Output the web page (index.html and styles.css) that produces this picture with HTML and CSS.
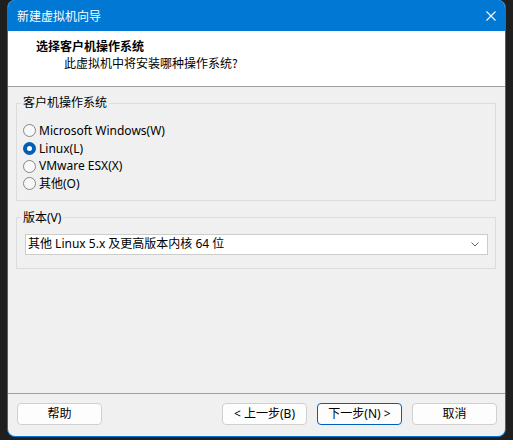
FILE: index.html
```html
<html>
    <head>
        <title>新建虚拟机向导</title>
        <link rel="stylesheet" href="styles.css">
    </head>
    <body>
        <div class="window">
            <div class="titlebar">
                <span class="title">新建虚拟机向导</span>
                <svg class="close" width="10" height="10" viewBox="0 0 10 10">
                    <path d="M0.5 0.5 L9.5 9.5 M9.5 0.5 L0.5 9.5" stroke="#fff" stroke-width="1.1" fill="none"/>
                </svg>
            </div>

            <div class="header">
                <div class="header-title">选择客户机操作系统</div>
                <div class="header-sub">此虚拟机中将安装哪种操作系统?</div>
            </div>

            <div class="main">
                <fieldset class="group">
                    <legend>客户机操作系统</legend>
                    <div class="radios">
                        <div class="radio"><span class="dot"></span>Microsoft Windows(W)</div>
                        <div class="radio checked"><span class="dot"></span>Linux(L)</div>
                        <div class="radio"><span class="dot"></span>VMware ESX(X)</div>
                        <div class="radio"><span class="dot"></span>其他(O)</div>
                    </div>
                </fieldset>

                <fieldset class="group version">
                    <legend>版本(V)</legend>
                    <div class="combo">
                        <span>其他 Linux 5.x 及更高版本内核 64 位</span>
                        <svg width="8" height="5" viewBox="0 0 8 5">
                            <path d="M0.5 0.5 L4 4 L7.5 0.5" stroke="#606060" stroke-width="1" fill="none"/>
                        </svg>
                    </div>
                </fieldset>
            </div>

            <div class="footer">
                <button class="btn">帮助</button>
                <div class="spacer"></div>
                <button class="btn">&lt; 上一步(B)</button>
                <button class="btn primary">下一步(N) &gt;</button>
                <button class="btn">取消</button>
            </div>
        </div>
    </body>
</html>
```

FILE: styles.css
```css
body {
    margin: 0;
    background-color: #1f1f1f;
    font-family: "Noto Sans", "Noto Sans CJK SC", sans-serif;
    font-size: 12px;
    color: #000;
}
.window {
    box-sizing: border-box;
    margin-left: 7px;
    width: 499px;
    height: 437px;
    border: 1px solid #0078d4;
    border-top: none;
    border-radius: 8px;
    overflow: hidden;
    background-color: #f0f0f0;
    display: flex;
    flex-direction: column;
}
.titlebar {
    height: 31px;
    background-color: #0078d4;
    color: white;
    display: flex;
    align-items: center;
    padding: 0 9px 0 9px;
    flex-shrink: 0;
}
.title {
    flex: 1;
    font-family: "Noto Sans CJK SC", sans-serif;
    line-height: 16px;
}
.header {
    height: 56px;
    background-color: white;
    border-bottom: 1px solid #a0a0a0;
    padding: 7px 0 0 28px;
    box-sizing: border-box;
    flex-shrink: 0;
}
.header-title {
    font-family: "Noto Sans CJK SC", sans-serif;
    font-weight: bold;
    line-height: 16px;
}
.header-sub {
    font-family: "Noto Sans CJK SC", sans-serif;
    line-height: 16px;
    margin: 1px 0 0 28px;
}
.main {
    flex: 1;
    padding: 8px 9px 0 8px;
}
.group {
    margin: 0;
    padding: 0 7px 7px 4px;
    border: 1px solid #dcdcdc;
    min-width: 0;
}
.group legend {
    padding: 0 2px;
    line-height: 16px;
    font-family: "Noto Sans", "Noto Sans CJK SC", sans-serif;
}
.radios {
    padding: 11px 0 0 2px;
}
.radio {
    display: flex;
    align-items: center;
    height: 17.7px;
    line-height: 16px;
}
.dot {
    box-sizing: border-box;
    width: 13px;
    height: 13px;
    border: 1px solid #868686;
    border-radius: 50%;
    background-color: #f8f8f8;
    margin-right: 3px;
}
.radio.checked .dot {
    border: 4px solid #005fb8;
    background-color: white;
}
.version {
    margin-top: 9px;
    padding: 0 7px 13px 8px;
}
.version legend {
    margin-left: -4px;
}
.combo {
    margin-top: 8px;
    height: 21px;
    box-sizing: border-box;
    border: 1px solid #cccccc;
    background-color: white;
    display: flex;
    align-items: center;
    justify-content: space-between;
    padding: 0 8px 0 2px;
    line-height: 16px;
}
.footer {
    border-top: 1px solid #a0a0a0;
    padding: 9px 8px 11px 9px;
    display: flex;
    gap: 10px;
    flex-shrink: 0;
}
.spacer {
    flex: 1;
}
.btn {
    width: 85px;
    height: 22px;
    box-sizing: border-box;
    border: 1px solid #d0d0d0;
    border-radius: 4px;
    background-color: #fdfdfd;
    font-family: "Noto Sans", "Noto Sans CJK SC", sans-serif;
    font-size: 12px;
    line-height: 16px;
    padding: 0;
    color: #000;
}
.btn.primary {
    border-color: #005fb8;
}
```
